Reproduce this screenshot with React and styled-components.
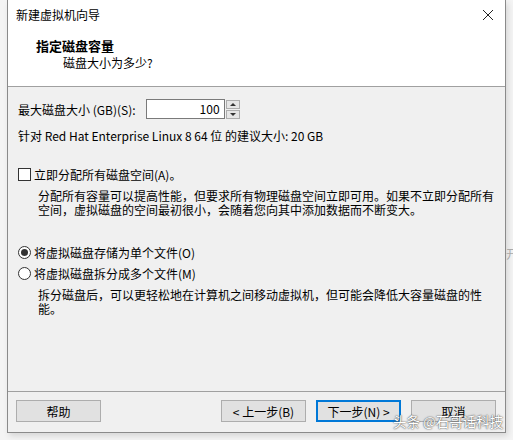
import React from 'react'
import styled, { createGlobalStyle } from 'styled-components'

const GlobalStyle = createGlobalStyle`
  html, body {
    margin: 0;
    padding: 0;
    background: #f4f4f4;
    font-family: "Microsoft YaHei UI", "Noto Sans CJK SC", sans-serif;
    font-size: 12px;
    color: #000;
  }
`

const Screen = styled.div`
  width: 513px;
  height: 440px;
  position: relative;
  overflow: hidden;
  padding-left: 7px;
  box-sizing: border-box;
`

const Window = styled.div`
  width: 499px;
  height: 433px;
  box-sizing: border-box;
  border: 1px solid #8a8a8a;
  border-top: none;
  background: #f0f0f0;
  display: flex;
  flex-direction: column;
  box-shadow: 2px 3px 6px rgba(0, 0, 0, 0.12);
`

const TitleBar = styled.div`
  height: 30px;
  background: #fff;
  display: flex;
  align-items: center;
  justify-content: space-between;
  padding: 0 8px 0 8px;
  flex-shrink: 0;
`

const TitleText = styled.span`
  font-size: 12px;
  line-height: 1;
`

const CloseIcon = styled.svg`
  width: 12px;
  height: 12px;
  margin-right: 3px;
`

const Header = styled.div`
  background: #fff;
  height: 57px;
  border-bottom: 1px solid #a0a0a0;
  padding: 8px 0 0 28px;
  box-sizing: border-box;
  flex-shrink: 0;
`

const HeaderTitle = styled.div`
  font-weight: bold;
  font-size: 13px;
  line-height: 16px;
`

const HeaderSub = styled.div`
  margin: 1px 0 0 27px;
  line-height: 16px;
`

const Body = styled.div`
  flex: 1;
  padding: 11px 10px 0 10px;
  display: flex;
  flex-direction: column;
`

const Row = styled.div`
  display: flex;
  align-items: center;
  height: ${p => p.h || 18}px;
  margin-top: ${p => p.mt || 0}px;
`

const Label = styled.span`
  white-space: nowrap;
`

const SpinBox = styled.div`
  display: flex;
  align-items: center;
  margin-left: 10px;
`

const NumberField = styled.div`
  width: 79px;
  height: 20px;
  box-sizing: border-box;
  border: 1px solid #7a7a7a;
  background: #fff;
  text-align: right;
  padding-right: 4px;
  line-height: 18px;
`

const Spinner = styled.div`
  display: flex;
  flex-direction: column;
  margin-left: 1px;
  gap: 1px;
`

const SpinButton = styled.div`
  width: 14px;
  height: 9px;
  background: #e6e6e6;
  border: 1px solid #adadad;
  box-sizing: border-box;
  display: flex;
  align-items: center;
  justify-content: center;
`

const Tri = styled.div`
  width: 0;
  height: 0;
  border-left: 3px solid transparent;
  border-right: 3px solid transparent;
  ${p => (p.down ? 'border-top: 3px solid #333;' : 'border-bottom: 3px solid #333;')}
`

const CheckBox = styled.span`
  width: 13px;
  height: 13px;
  box-sizing: border-box;
  border: 1px solid #333;
  background: #fff;
  margin-right: 3px;
  flex-shrink: 0;
`

const Radio = styled.span`
  width: 13px;
  height: 13px;
  box-sizing: border-box;
  border: 1px solid #333;
  border-radius: 50%;
  background: #fff;
  margin-right: 3px;
  flex-shrink: 0;
  display: flex;
  align-items: center;
  justify-content: center;
  &::after {
    content: '';
    width: 7px;
    height: 7px;
    border-radius: 50%;
    background: ${p => (p.checked ? '#333' : 'transparent')};
  }
`

const Description = styled.p`
  margin: ${p => p.mt || 4}px 0 0 20px;
  line-height: 14px;
  width: 460px;
`

const Spacer = styled.div`
  flex: 1;
`

const Footer = styled.div`
  height: 40px;
  border-top: 1px solid #a0a0a0;
  display: flex;
  align-items: center;
  padding: 0 9px 0 8px;
  flex-shrink: 0;
`

const Button = styled.div`
  width: 85px;
  height: 22px;
  box-sizing: border-box;
  border: ${p => (p.primary ? '2px solid #0078d7' : '1px solid #adadad')};
  background: #e1e1e1;
  display: flex;
  align-items: center;
  justify-content: center;
  margin-left: ${p => p.ml || 0}px;
  margin-bottom: 2px;
`

const Watermark = styled.div`
  position: absolute;
  left: 393px;
  top: 411px;
  font-size: 13.5px;
  color: #fff;
  text-shadow: 0 0 1px #444, 0 0 2px #666;
  white-space: nowrap;
`

const BehindText = styled.div`
  position: absolute;
  left: 506px;
  top: 245px;
  color: #aaa;
`

export default function App() {
  return (
    <Screen>
      <GlobalStyle />
      <Window>
        <TitleBar>
          <TitleText>新建虚拟机向导</TitleText>
          <CloseIcon viewBox="0 0 12 12">
            <path d="M1 1 L11 11 M11 1 L1 11" stroke="#222" strokeWidth="1" fill="none" />
          </CloseIcon>
        </TitleBar>
        <Header>
          <HeaderTitle>指定磁盘容量</HeaderTitle>
          <HeaderSub>磁盘大小为多少?</HeaderSub>
        </Header>
        <Body>
          <Row h={22}>
            <Label>最大磁盘大小 (GB)(S):</Label>
            <SpinBox>
              <NumberField>100</NumberField>
              <Spinner>
                <SpinButton><Tri /></SpinButton>
                <SpinButton><Tri down /></SpinButton>
              </Spinner>
            </SpinBox>
          </Row>
          <Row mt={6}>
            <Label>针对 Red Hat Enterprise Linux 8 64 位 的建议大小: 20 GB</Label>
          </Row>
          <Row mt={21}>
            <CheckBox />
            <Label>立即分配所有磁盘空间(A)。</Label>
          </Row>
          <Description mt={6}>
            分配所有容量可以提高性能，但要求所有物理磁盘空间立即可用。如果不立即分配所有空间，虚拟磁盘的空间最初很小，会随着您向其中添加数据而不断变大。
          </Description>
          <Row mt={26}>
            <Radio checked />
            <Label>将虚拟磁盘存储为单个文件(O)</Label>
          </Row>
          <Row mt={3}>
            <Radio />
            <Label>将虚拟磁盘拆分成多个文件(M)</Label>
          </Row>
          <Description mt={6}>
            拆分磁盘后，可以更轻松地在计算机之间移动虚拟机，但可能会降低大容量磁盘的性能。
          </Description>
          <Spacer />
        </Body>
        <Footer>
          <Button>帮助</Button>
          <Spacer />
          <Button>&lt; 上一步(B)</Button>
          <Button primary ml={10}>下一步(N) &gt;</Button>
          <Button ml={10}>取消</Button>
        </Footer>
      </Window>
      <BehindText>开</BehindText>
      <Watermark>头条 @石哥话科技</Watermark>
    </Screen>
  )
}
